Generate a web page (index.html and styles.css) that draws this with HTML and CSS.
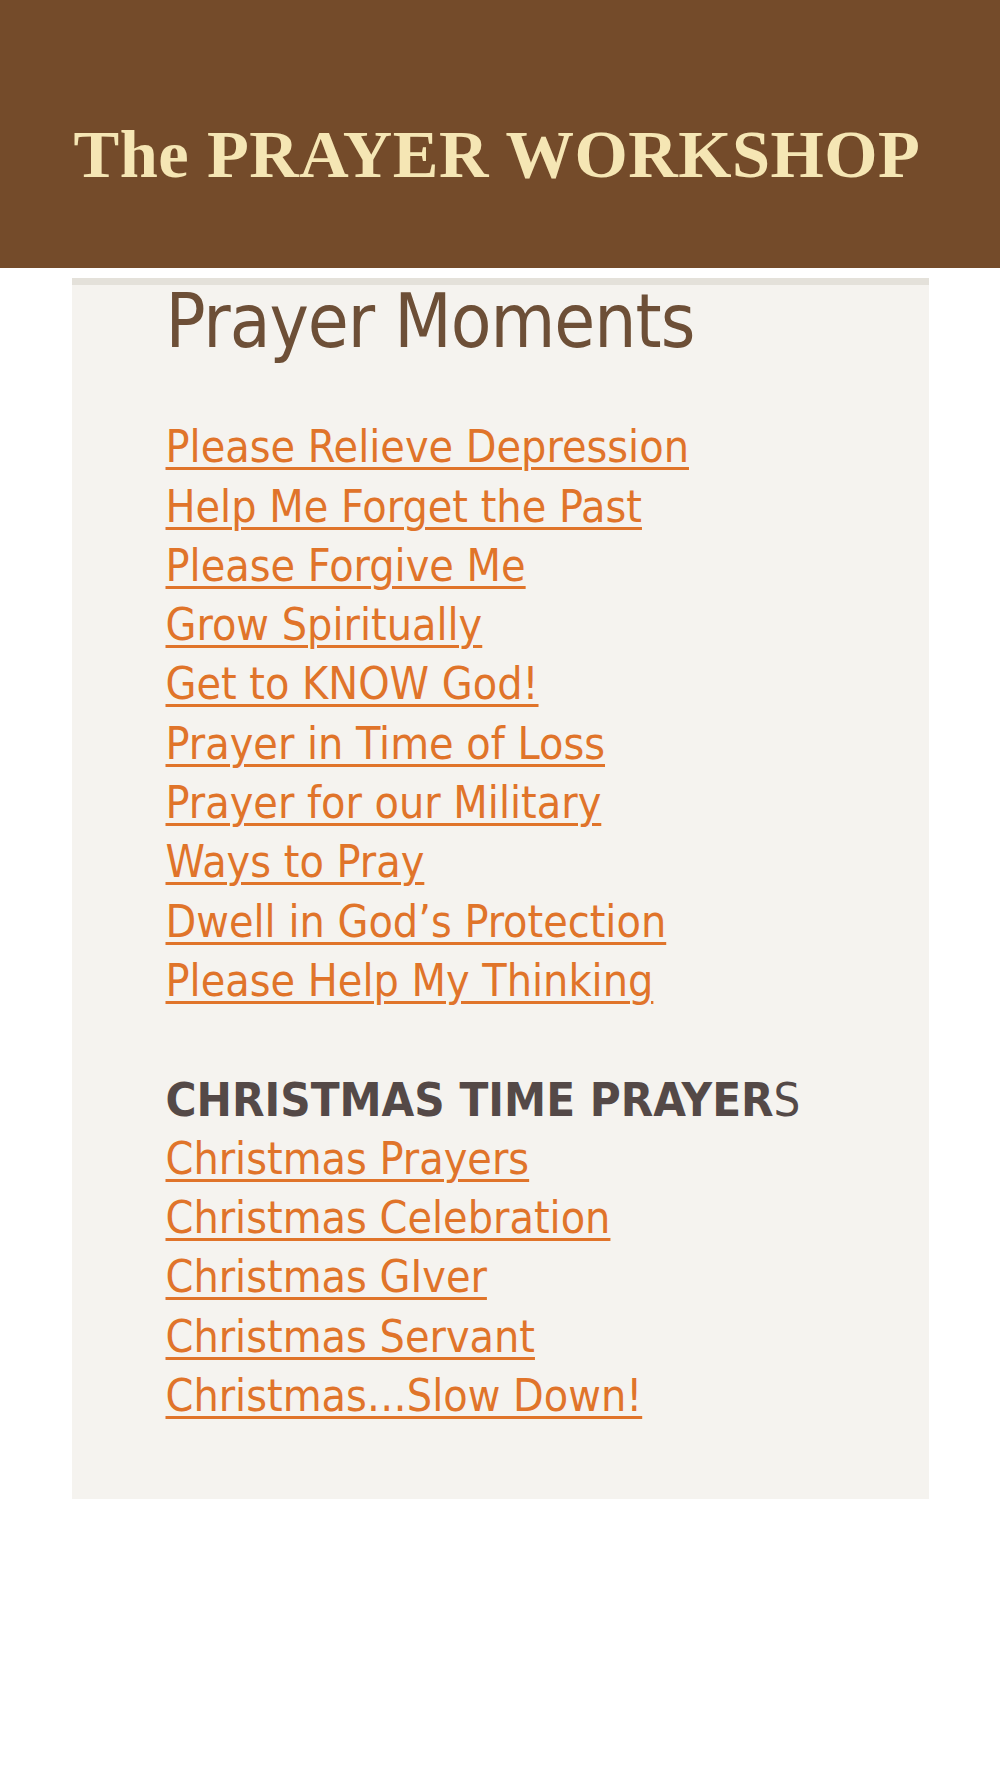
FILE: index.html
```html
<!DOCTYPE html>
<html lang="en">
<head>
  <meta charset="UTF-8">
  <title>The PRAYER WORKSHOP - Prayer Moments</title>
  <meta name="viewport" content="width=device-width, initial-scale=1">
  <link rel="stylesheet" href="styles.css">
</head>
<body>
  <header class="site-header">
    <h1>The PRAYER WORKSHOP</h1>
  </header>

  <div class="container">
    <h2>Prayer Moments</h2>

    <div class="link-list">
      <a href="#">Please Relieve Depression</a>
      <a href="#">Help Me Forget the Past</a>
      <a href="#">Please Forgive Me</a>
      <a href="#">Grow Spiritually</a>
      <a href="#">Get to KNOW God!</a>
      <a href="#">Prayer in Time of Loss</a>
      <a href="#">Prayer for our Military</a>
      <a href="#">Ways to Pray</a>
      <a href="#">Dwell in God’s Protection</a>
      <a href="#">Please Help My Thinking</a>
    </div>

    <div class="link-list">
      <p class="section-title"><strong>CHRISTMAS TIME PRAYER</strong>S</p>
      <a href="#">Christmas Prayers</a>
      <a href="#">Christmas Celebration</a>
      <a href="#">Christmas GIver</a>
      <a href="#">Christmas Servant</a>
      <a href="#">Christmas…Slow Down!</a>
    </div>
  </div>
</body>
</html>
```

FILE: styles.css
```css
:root {
  --header-brown: #744b2a;
  --title-cream: #f5e6b4;
  --heading-brown: #6d4f37;
  --link-orange: #e0742a;
  --box-bg: #f5f3ef;
  --text-dark: #544947;
  --line: 59.3px;
}
body {
  margin: 0;
  background: #fff;
  font-family: "DejaVu Sans Condensed", "DejaVu Sans", sans-serif;
  font-stretch: condensed;
}
.site-header {
  box-sizing: border-box;
  height: 268px;
  padding: 115px 6px 0 0;
  background: var(--header-brown);
}
.site-header h1 {
  margin: 0;
  font-family: "Liberation Serif", "Times New Roman", serif;
  font-size: 68.5px;
  font-weight: bold;
  line-height: 78px;
  letter-spacing: 0.5px;
  text-align: center;
  color: var(--title-cream);
}
.container {
  box-sizing: border-box;
  width: 857px;
  margin: 10px auto 0;
  padding: 0 20px 74px 94px;
  background: var(--box-bg);
  border-top: 7px solid #e4e1da;
}
h2 {
  margin: 0;
  font-size: 74px;
  font-weight: normal;
  line-height: 73px;
  letter-spacing: -1px;
  color: var(--heading-brown);
}
.link-list {
  margin-top: var(--line);
  font-size: 44.4px;
  line-height: var(--line);
}
.link-list a {
  display: block;
  width: fit-content;
  color: var(--link-orange);
  text-decoration: underline;
  text-decoration-thickness: 3px;
  text-underline-offset: 5px;
}
.section-title {
  margin: 0;
  font-size: 47px;
  color: var(--text-dark);
}
```
